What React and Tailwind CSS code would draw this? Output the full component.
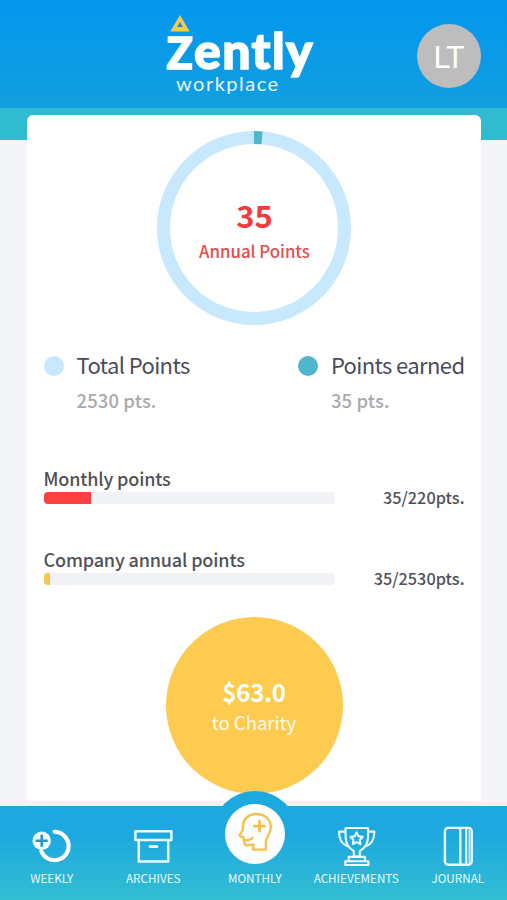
import React from "react";

function Logo() {
  return (
    <div className="relative flex h-[94px] w-[160px] flex-col items-start font-['Lato',sans-serif] text-white">
      <svg viewBox="0 0 20 17" className="absolute left-[5px] top-[15px] h-[16.5px] w-[20px]">
        <path d="M10 0 L20 17 H0 Z" fill="#f3cc50" />
        <path d="M10 7.2 L13 12.3 H7 Z" fill="#1d8fc0" />
      </svg>
      <span className="ml-[1.5px] mt-[22px] h-[52px] whitespace-nowrap text-[50px] font-black leading-[56px] tracking-[1.4px] [-webkit-text-stroke:1.5px_white]">
        <span className="text-[43px]">Z</span>ently
      </span>
      <span className="ml-[11px] h-[20px] whitespace-nowrap text-[20px] leading-[18px] tracking-[1.5px] text-[#e4f6ff]">workplace</span>
    </div>
  );
}

function Ring() {
  return (
    <div className="relative flex size-[194px] flex-col items-center self-center pt-[68px] text-[#ee3c40]">
      <svg viewBox="0 0 194 194" className="absolute inset-0 size-full" fill="none" strokeWidth="13">
        <circle cx="97" cy="97" r="90.5" stroke="#c7e8fd" />
        <path d="M97 6.5 A90.5 90.5 0 0 1 105 6.9" stroke="#50b6cb" />
      </svg>
      <div className="pl-px text-[31px] font-bold leading-[32px]">35</div>
      <div className="mt-[8px] pl-px text-[16.8px] font-medium leading-[24px] text-[#e34d50]">Annual Points</div>
    </div>
  );
}

function Legend({ dot, label, value }) {
  return (
    <div className="flex gap-[13px]">
      <span className={"mt-2 size-[20px] rounded-full " + dot} />
      <div>
        <div className="whitespace-nowrap text-[22px] leading-[32px] tracking-[-0.6px] text-[#4a4b5c]">{label}</div>
        <div className="mt-[6px] text-[18.5px] font-medium leading-[28px] tracking-[0.1px] text-[#a9a9ab]">{value}</div>
      </div>
    </div>
  );
}

function Progress({ label, value, fill }) {
  return (
    <div className="text-[#505158]">
      <div className="h-[26px] text-[18px] font-medium leading-[24px] tracking-[-0.15px]">{label}</div>
      <div className="flex h-[12px] items-center justify-between">
        <div className="h-[12px] w-[291px] overflow-hidden rounded-[4px] bg-[#f2f3f6]">
          <div className={"h-full " + fill} />
        </div>
        <span className="mb-[2px] text-[16.3px] font-medium leading-[24px]">{value}</span>
      </div>
    </div>
  );
}

function WeeklyIcon() {
  return (
    <svg viewBox="0 0 40 40" className="size-10" fill="none">
      <path d="M22.5 5.8 A14.2 14.2 0 1 1 9.2 25" stroke="#fff" strokeWidth="4" strokeLinecap="round" />
      <circle cx="9.7" cy="14.7" r="9.2" fill="#f1fbff" />
      <path d="M9.7 8.7 V20.7 M3.7 14.7 H15.7" stroke="#2b93bd" strokeWidth="2.6" />
    </svg>
  );
}

function ArchivesIcon() {
  return (
    <svg viewBox="0 0 40 40" className="size-10" fill="none" stroke="#eefaff" strokeWidth="2.5" strokeLinejoin="round">
      <rect x="2.4" y="5.3" width="36" height="8.6" />
      <path d="M5.8 14 V35.5 H35.2 V14" />
      <path d="M17.2 20.4 H23.8" strokeWidth="3" strokeLinecap="round" />
    </svg>
  );
}

function HeadIcon() {
  return (
    <svg viewBox="0 0 40 40" className="size-10" fill="none" stroke="#f6c04e" strokeWidth="2.4" strokeLinejoin="round" strokeLinecap="round">
      <path d="M17.4 26 C15.5 28.2 12.5 28.6 8.6 28.2 V25.4 L5.2 24.3 Q4.3 23.7 4.9 22.7 L8 17.5 C6.8 8.5 12.5 2 21.5 2 C30.5 2 35.8 8 35.8 15.3 C35.8 22 31 24.5 30.9 30 V37.6 H18.3 V32.4 L13 33.4 C10.4 33.6 9.2 32 9 29.2" />
      <path d="M24.5 9 V19.2 M19.4 14.1 H29.6" strokeWidth="2.8" />
    </svg>
  );
}

function TrophyIcon() {
  return (
    <svg viewBox="0 0 40 40" className="size-10" fill="none" stroke="#eefaff" strokeWidth="2.1" strokeLinejoin="round">
      <path d="M9.6 2 H32 V11 C32 18.5 28 22.5 23.8 25.2 V30.6 H17.8 V25.2 C13.6 22.5 9.6 18.5 9.6 11 Z" />
      <path d="M9.6 5.6 H3 C3 13 5.5 18.6 12.2 20.4 M32 5.6 H38.4 C38.4 13 36 18.6 29.4 20.4" />
      <path d="M12.7 30.9 H29 V35.2 H12.7 Z M9.3 35.3 H32.4 V39 H9.3 Z" />
      <path d="M20.6 6.4 L22.5 10.3 L26.7 10.9 L23.7 13.9 L24.4 18.1 L20.6 16.1 L16.8 18.1 L17.5 13.9 L14.5 10.9 L18.7 10.3 Z" />
    </svg>
  );
}

function JournalIcon() {
  return (
    <svg viewBox="0 0 40 40" className="size-10" fill="none" stroke="#eefaff" strokeWidth="2.4">
      <rect x="6.9" y="1.9" width="26.8" height="36.8" rx="3.2" />
      <path d="M22.3 2 V38.6" />
      <path d="M28.2 2 V38.6" strokeWidth="2" />
      <path d="M31.2 2.5 V38" strokeWidth="1.2" />
    </svg>
  );
}

function Tab({ label, children }) {
  return (
    <div className="relative flex flex-col items-center pt-[20px]">
      {children}
      <span className="mt-[2px] whitespace-nowrap text-[11.7px] leading-[20px] text-[#e8f8fc]">{label}</span>
    </div>
  );
}

export default function App() {
  return (
    <div className="flex h-[900px] w-[507px] flex-col overflow-hidden bg-[#f3f5f9] font-['Noto_Sans_CJK_SC',sans-serif]">
      <header className="flex h-[108px] shrink-0 justify-between bg-linear-to-b from-[#0396ef] to-[#129fdf] pl-[165px] pr-[26px]">
        <Logo />
        <div className="mt-[24px] flex size-[64px] items-center justify-center rounded-full bg-[#bdbdbd] pt-[2px] font-['Roboto',sans-serif] text-[31px] leading-none text-white">LT</div>
      </header>
      <div className="h-[32px] shrink-0 bg-[#31bbd1]" />

      <main className="-mt-[25px] ml-[27px] flex h-[686px] w-[454px] shrink-0 flex-col rounded-t-[6px] bg-white pl-[16.5px] pr-[16.5px] pt-[16px]">
        <Ring />
        <div className="mt-[23px] flex justify-between">
          <Legend dot="bg-[#c7e8fd]" label="Total Points" value="2530 pts." />
          <Legend dot="bg-[#50b6cb]" label="Points earned" value="35 pts." />
        </div>
        <div className="mt-[52px] flex flex-col gap-[43px]">
          <Progress label="Monthly points" value="35/220pts." fill="w-[47px] bg-[#fc3f41]" />
          <Progress label="Company annual points" value="35/2530pts." fill="w-[6px] bg-[#f5c64e]" />
        </div>
        <div className="mt-[32px] flex size-[177px] shrink-0 flex-col items-center self-center rounded-full bg-[#fdcb50] pt-[59px] text-white">
          <div className="text-[24px] font-bold leading-[32px] tracking-[-0.2px]">$63.0</div>
          <div className="mt-[2px] text-[18.5px] leading-[24px] text-[#fffae8]">to Charity</div>
        </div>
      </main>

      <div className="h-[5px] shrink-0 bg-linear-to-r from-[#f2f3f6] to-[#f3f2f1]" />
      <nav className="relative grid h-[94px] shrink-0 grid-cols-[repeat(5,101.5px)] bg-linear-to-b from-[#1da9e0] from-30% to-[#33bdd0] pl-[1px]">
        <div className="absolute -top-[15px] left-[212px] size-[86px] rounded-full bg-[#1da9e0] [clip-path:inset(0_0_56px_0)]" />
        <Tab label="WEEKLY"><WeeklyIcon /></Tab>
        <Tab label="ARCHIVES"><ArchivesIcon /></Tab>
        <div className="relative flex flex-col items-center">
          <div className="-mt-[2px] flex size-[60px] items-center justify-center rounded-full bg-white pb-1">
            <HeadIcon />
          </div>
          <span className="mt-[4px] text-[11.7px] leading-[20px] text-[#e8f8fc]">MONTHLY</span>
        </div>
        <Tab label="ACHIEVEMENTS"><TrophyIcon /></Tab>
        <Tab label="JOURNAL"><JournalIcon /></Tab>
      </nav>
    </div>
  );
}
